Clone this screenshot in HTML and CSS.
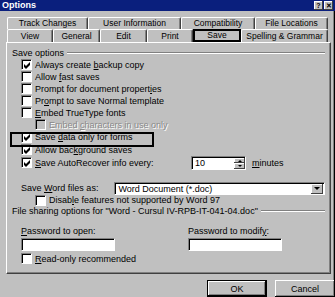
FILE: index.html
```html
<!DOCTYPE html>
<html lang="en">
<head>
    <meta charset="UTF-8">
    <title>Options</title>
    <link rel="stylesheet" href="styles.css">
</head>
<body>
    <div class="dialog">
        <div class="titlebar">
            <span class="title">Options</span>
            <span class="caption-btns">
                <span class="cbtn">?</span>
                <span class="cbtn">&#x2715;</span>
            </span>
        </div>

        <div class="tabs">
            <div class="tab-row back">
                <span class="tab">Track Changes</span>
                <span class="tab">User Information</span>
                <span class="tab">Compatibility</span>
                <span class="tab">File Locations</span>
            </div>
            <div class="tab-row front">
                <span class="tab">View</span>
                <span class="tab">General</span>
                <span class="tab">Edit</span>
                <span class="tab">Print</span>
                <span class="tab active">Save</span>
                <span class="tab">Spelling &amp; Grammar</span>
            </div>
        </div>

        <div class="panel">
            <div class="group-head">Save options</div>
            <div class="opts">
                <div class="row"><span class="cb checked"></span><span>Always create <u>b</u>ackup copy</span></div>
                <div class="row"><span class="cb"></span><span>Allow <u>f</u>ast saves</span></div>
                <div class="row"><span class="cb"></span><span>Prompt for document propert<u>i</u>es</span></div>
                <div class="row"><span class="cb"></span><span>Pr<u>o</u>mpt to save Normal template</span></div>
                <div class="row"><span class="cb"></span><span><u>E</u>mbed TrueType fonts</span></div>
                <div class="row sub disabled"><span class="cb"></span><span>Embed <u>c</u>haracters in use only</span></div>
                <div class="row tall marked">
                    <span class="cb checked"></span><span>Save <u>d</u>ata only for forms</span>
                    <span class="mark"></span>
                </div>
                <div class="row"><span class="cb checked"></span><span>Allow bac<u>k</u>ground saves</span></div>
                <div class="row auto">
                    <span class="cb checked"></span><span class="auto-label"><u>S</u>ave AutoRecover info every:</span>
                    <span class="spin">
                        <span class="spin-input">10</span>
                        <span class="spin-btns"><span class="spin-btn up"></span><span class="spin-btn down"></span></span>
                    </span>
                    <span class="unit"><u>m</u>inutes</span>
                </div>
                <div class="row saveas">
                    <span class="saveas-label">Save <u>W</u>ord files as:</span>
                    <span class="select">
                        <span class="select-text">Word Document (*.doc)</span>
                        <span class="select-btn"></span>
                    </span>
                </div>
                <div class="row sub short"><span class="cb"></span><span>Disab<u>l</u>e features not supported by Word 97</span></div>
            </div>

            <div class="group-head share">File sharing options for &quot;Word - Cursul IV-RPB-IT-041-04.doc&quot;</div>
            <div class="passwords">
                <div class="pw">
                    <span><u>P</u>assword to open:</span>
                    <span class="field"></span>
                </div>
                <div class="pw">
                    <span>Password to modif<u>y</u>:</span>
                    <span class="field"></span>
                </div>
            </div>
            <div class="opts">
                <div class="row readonly"><span class="cb"></span><span><u>R</u>ead-only recommended</span></div>
            </div>
        </div>

        <div class="buttons">
            <span class="button default">OK</span>
            <span class="button">Cancel</span>
        </div>
    </div>
</body>
</html>
```

FILE: styles.css
```css
* {
  box-sizing: border-box;
}

body {
  margin: 0;
  background: #c0c0c0;
  font-family: "Liberation Sans", Arial, sans-serif;
  font-size: 9px;
  color: #000;
}

u {
  text-underline-offset: 1px;
}

.dialog {
  width: 335px;
  height: 297px;
  overflow: hidden;
  display: flex;
  flex-direction: column;
  box-shadow: inset -1px 0 #000, inset -2px 0 #808080;
}

.titlebar {
  height: 11px;
  background: #0a1f7d;
  color: #fff;
  display: flex;
  align-items: center;
  justify-content: space-between;
  padding: 0 2px;
}

.title {
  font-weight: bold;
}

.caption-btns {
  display: flex;
  gap: 1px;
}

.cbtn {
  width: 9px;
  height: 9px;
  background: #c0c0c0;
  color: #000;
  font-size: 7px;
  font-weight: bold;
  line-height: 9px;
  text-align: center;
  box-shadow: inset -1px -1px #404040, inset 1px 1px #fff;
}

/* tabs */
.tabs {
  margin: 6px 0 0 7px;
  font-size: 8.5px;
}

.tab-row {
  display: grid;
}

.tab-row.back {
  grid-template-columns: 81px 93px 74px 73px;
  height: 12px;
}

.tab-row.front {
  grid-template-columns: 46px 47px 47px 46px 48px 87px;
  height: 13px;
}

.tab {
  display: flex;
  align-items: center;
  justify-content: center;
  white-space: nowrap;
  overflow: hidden;
  border-top: 1px solid #fff;
  border-left: 1px solid #fff;
  border-right: 1px solid #404040;
  border-radius: 2px 2px 0 0;
  box-shadow: inset -1px 0 #808080;
}

.tab.active {
  border: 2px solid #000;
  border-radius: 0;
  box-shadow: none;
}

/* page */
.panel {
  margin: 0 4px 0 6px;
  height: 234px;
  border-top: 1px solid #fff;
  border-left: 1px solid #fff;
  border-right: 1px solid #404040;
  border-bottom: 1px solid #404040;
  box-shadow: inset -1px -1px #808080;
  padding: 4px 5px 0 5px;
}

.group-head {
  display: flex;
  align-items: center;
  gap: 3px;
  height: 12px;
  white-space: nowrap;
}

.group-head::after {
  content: "";
  flex: 1;
  border-top: 1px solid #808080;
  border-bottom: 1px solid #fff;
}

.group-head.share {
  height: 10px;
}

.opts {
  padding-left: 9px;
}

.row {
  display: flex;
  align-items: center;
  gap: 3px;
  height: 12px;
  white-space: nowrap;
}

.row.tall {
  height: 13px;
}

.row.sub {
  padding-left: 14px;
}

.row.short {
  height: 11px;
}

.row.disabled {
  color: #8a8a8a;
  text-shadow: 1px 1px #fff;
}

.row.disabled .cb {
  background: #c0c0c0;
}

.cb {
  flex: none;
  width: 11px;
  height: 11px;
  background: #fff;
  border: 1px solid;
  border-color: #808080 #fff #fff #808080;
  box-shadow: inset 1px 1px #000;
}

.cb.checked {
  background: #fff url("data:image/svg+xml,%3Csvg xmlns='http://www.w3.org/2000/svg' viewBox='0 0 7 7'%3E%3Cpath d='M0 2l2 2 4-4v3l-4 4-2-2z' fill='%23000'/%3E%3C/svg%3E") 1.5px 1.5px / 7px 7px no-repeat;
}

/* annotation box drawn over the dialog */
.marked {
  position: relative;
}

.mark {
  position: absolute;
  left: -11px;
  top: 1px;
  width: 144px;
  height: 15px;
  border: 2px solid #000;
}

.row.auto {
  height: 14px;
}

.auto-label {
  width: 153px;
}

.spin {
  display: flex;
  width: 55px;
  height: 14px;
  background: #fff;
  border: 1px solid;
  border-color: #808080 #fff #fff #808080;
  box-shadow: inset 1px 1px #000;
}

.spin-input {
  flex: 1;
  padding: 1px 0 0 3px;
}

.spin-btns {
  display: flex;
  flex-direction: column;
  width: 11px;
  padding: 1px 0 0 0;
}

.spin-btn {
  flex: 1;
  background: #c0c0c0;
  box-shadow: inset -1px -1px #404040, inset 1px 1px #fff;
  display: flex;
  align-items: center;
  justify-content: center;
}

.spin-btn::before {
  content: "";
  border-left: 2px solid transparent;
  border-right: 2px solid transparent;
}

.spin-btn.up::before {
  border-bottom: 2px solid #000;
}

.spin-btn.down::before {
  border-top: 2px solid #000;
}

.unit {
  margin-left: 3px;
}

.row.saveas {
  height: 13px;
  margin-top: 12px;
  gap: 0;
  padding-left: 0;
}

.saveas-label {
  width: 94px;
}

.select {
  display: flex;
  align-items: center;
  width: 212px;
  height: 13px;
  background: #fff;
  border: 1px solid;
  border-color: #808080 #fff #fff #808080;
  box-shadow: inset 1px 1px #000;
  padding: 1px 1px 0 0;
}

.select-text {
  flex: 1;
  padding-left: 3px;
}

.select-btn {
  width: 12px;
  height: 10px;
  background: #c0c0c0;
  box-shadow: inset -1px -1px #404040, inset 1px 1px #fff;
  display: flex;
  align-items: center;
  justify-content: center;
}

.select-btn::before {
  content: "";
  border-left: 3px solid transparent;
  border-right: 3px solid transparent;
  border-top: 3px solid #000;
}

.passwords {
  display: grid;
  grid-template-columns: 167px 1fr;
  margin-top: 9px;
  padding-left: 9px;
}

.pw {
  display: flex;
  flex-direction: column;
  gap: 1px;
  line-height: 12px;
}

.field {
  width: 94px;
  height: 13px;
  background: #fff;
  border: 1px solid;
  border-color: #808080 #fff #fff #808080;
  box-shadow: inset 1px 1px #000;
}

.row.readonly {
  margin-top: 2px;
}

/* buttons */
.buttons {
  display: flex;
  justify-content: flex-end;
  gap: 8px;
  margin-top: 6px;
}

.button {
  width: 60px;
  height: 17px;
  display: flex;
  align-items: center;
  justify-content: center;
  box-shadow: inset -1px -1px #000, inset 1px 1px #fff, inset -2px -2px #808080;
}

.button.default {
  border: 1px solid #000;
}
```
